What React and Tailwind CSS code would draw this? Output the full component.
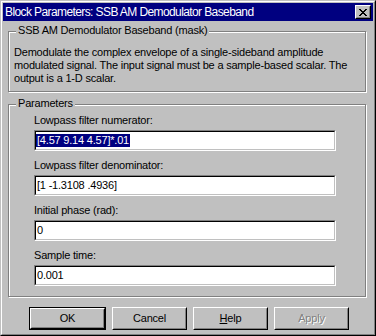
import React from "react";

const Field = ({ label, value, selected }) => (
  <div className="mb-[8px]">
    <div className="h-[13px] leading-[13px]">{label}</div>
    <div className="mt-[3px] w-[302px] h-[21px] border border-t-[#808080] border-l-[#808080] border-r-white border-b-white">
      <div className="h-full bg-white border border-t-black border-l-black border-r-[#c0c0c0] border-b-[#c0c0c0] flex items-center">
        {selected ? (
          <span className="bg-[#000080] text-white leading-[13px] px-px">{value}</span>
        ) : (
          <span className="leading-[13px] pl-px">{value}</span>
        )}
      </div>
    </div>
  </div>
);

const Button = ({ children, isDefault, disabled, width = "w-[75px]" }) => (
  <div className={`${width} h-[23px] ${isDefault ? "border border-black" : ""}`}>
    <div className="h-full border border-t-white border-l-white border-r-black border-b-black">
      <div
        className={`h-full flex items-center justify-center border border-t-[#c0c0c0] border-l-[#c0c0c0] border-r-[#808080] border-b-[#808080] ${
          disabled ? "text-[#808080] [text-shadow:1px_1px_0_#fff]" : ""
        }`}
      >
        {children}
      </div>
    </div>
  </div>
);

const GroupBox = ({ title, className, children }) => (
  <div
    className={`relative border border-[#808080] shadow-[inset_1px_1px_0_#fff,1px_1px_0_#fff] ${className}`}
  >
    <div className="absolute left-[7px] top-[-8px] px-[2px] bg-[#c0c0c0] leading-[13px]">
      {title}
    </div>
    {children}
  </div>
);

export default function App() {
  return (
    <div className="w-[376px] h-[336px] bg-[#c0c0c0] border border-t-[#c0c0c0] border-l-[#c0c0c0] border-r-black border-b-black [font-family:'Liberation_Sans',Arial,sans-serif] text-[11px] tracking-[-0.2px] text-black">
      <div className="h-full border border-t-white border-l-white border-r-[#808080] border-b-[#808080] p-px flex flex-col">
        {/* Title bar */}
        <div className="h-[18px] bg-[#000080] flex items-center justify-between pl-[2px] pr-[2px]">
          <span className="text-white text-[12px] tracking-[-0.6px] leading-[14px]">
            Block Parameters: SSB AM Demodulator Baseband
          </span>
          <div className="w-[16px] h-[14px] bg-[#c0c0c0] border border-t-white border-l-white border-r-black border-b-black">
            <div className="h-full border border-t-[#c0c0c0] border-l-[#c0c0c0] border-r-[#808080] border-b-[#808080] flex items-center justify-center">
              <svg width="8" height="7" viewBox="0 0 8 7" shapeRendering="crispEdges">
                <path
                  d="M0 0h2v1h-2zM6 0h2v1h-2zM1 1h2v1h-2zM5 1h2v1h-2zM2 2h4v1h-4zM3 3h2v1h-2zM2 4h4v1h-4zM1 5h2v1h-2zM5 5h2v1h-2zM0 6h2v1h-2zM6 6h2v1h-2z"
                  fill="#000"
                />
              </svg>
            </div>
          </div>
        </div>

        <div className="pl-[5px] pr-[7px]">
          <GroupBox title="SSB AM Demodulator Baseband (mask)" className="mt-[10px] h-[61px] pt-[14px] pl-[5px]">
            <p className="leading-[13px]">
              Demodulate the complex envelope of a single-sideband amplitude
              <br />
              modulated signal. The input signal must be a sample-based scalar. The
              <br />
              output is a 1-D scalar.
            </p>
          </GroupBox>

          <GroupBox title="Parameters" className="mt-[12px] h-[193px] pt-[9px] pl-[25px]">
            <Field label="Lowpass filter numerator:" value="[4.57 9.14 4.57]*.01" selected />
            <Field label="Lowpass filter denominator:" value="[1 -1.3108 .4936]" />
            <Field label="Initial phase (rad):" value="0" />
            <Field label="Sample time:" value="0.001" />
          </GroupBox>
        </div>

        <div className="mt-[10px] pl-[26px] flex gap-[6px]">
          <Button isDefault width="w-[77px]">OK</Button>
          <Button>Cancel</Button>
          <Button>
            <span>
              <span className="underline">H</span>elp
            </span>
          </Button>
          <Button disabled>Apply</Button>
        </div>
      </div>
    </div>
  );
}
